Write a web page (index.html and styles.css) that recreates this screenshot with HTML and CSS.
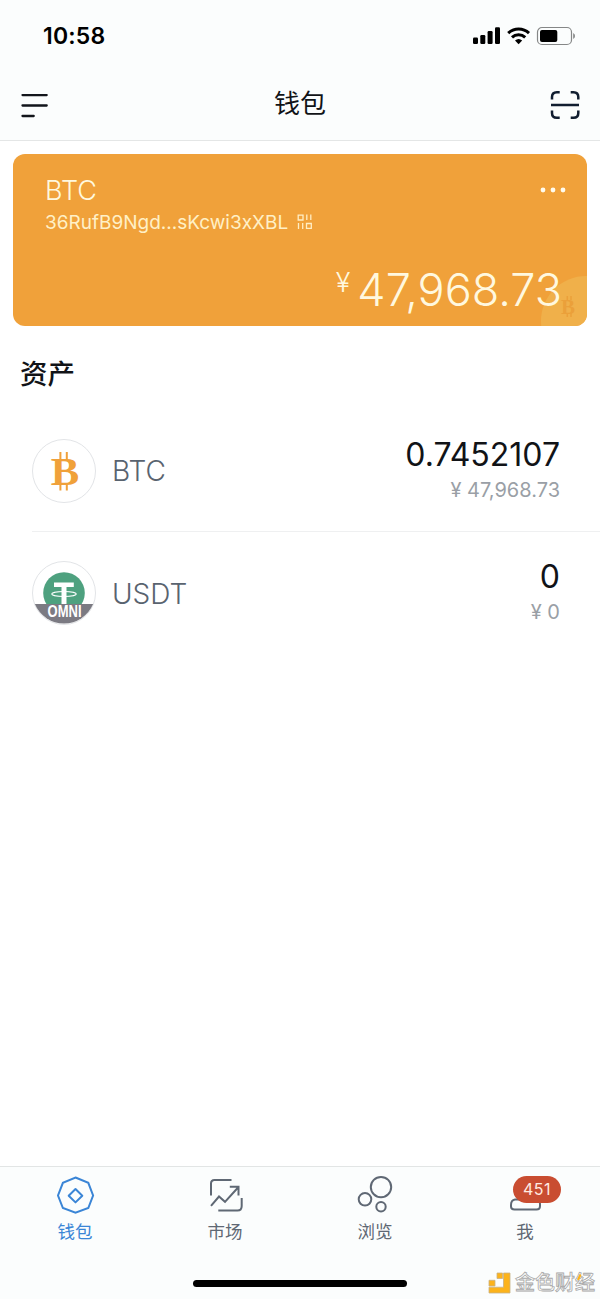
FILE: index.html
```html
<!DOCTYPE html>
<html lang="zh-CN">
<head>
<meta charset="utf-8">
<title>钱包</title>
<link rel="stylesheet" href="styles.css">
</head>
<body>
<div class="screen">
  <header class="header">
    <div class="status">
      <span class="time">10:58</span>
      <svg class="status-icons" width="104" height="20" viewBox="0 0 104 20">
        <rect x="1" y="11.5" width="5" height="6.5" rx="1.2"/>
        <rect x="8.3" y="9" width="5" height="9" rx="1.2"/>
        <rect x="15.6" y="5" width="5" height="13" rx="1.2"/>
        <rect x="23" y="1.3" width="5" height="16.700" rx="1.2"/>
        <g fill="none" stroke="#000" stroke-width="3">
          <path d="M36.200 7.200A15 15 0 0 1 57 7.200"/>
          <path d="M40 11.300A9.500 9.500 0 0 1 53.200 11.300"/>
        </g>
        <path d="M43 14.600A5.500 5.500 0 0 1 50.200 14.600L46.600 18.200Z"/>
        <rect x="65.500" y="1.500" width="34" height="17" rx="4.500" fill="none" stroke="#858787" stroke-width="1.200"/>
        <rect x="68" y="4" width="17.300" height="12" rx="2"/>
        <path d="M101.200 7v6Q103 12 103 10T101.200 7Z" fill="#858787"/>
      </svg>
    </div>
    <div class="navbar">
      <svg class="menu" width="30" height="30" viewBox="0 0 30 30" fill="none" stroke="#12151b" stroke-width="2.300" stroke-linecap="round"><path d="M2.500 5.100H26.700M2.500 15.500H26.700M2.500 26H13.700"/></svg>
      <h1 class="title">钱包</h1>
      <svg class="scan" width="30" height="30" viewBox="0 0 30 30" fill="none" stroke="#111e30" stroke-width="2.500"><path d="M2 9.500V7Q2 2.200 6.800 2.200H9.700M20.700 2.200H23.500Q28.300 2.200 28.300 7V9.500M2 20.500V23Q2 27.800 6.800 27.800H9.700M20.700 27.800H23.500Q28.300 27.800 28.300 23V20.500M1 14.900H29"/></svg>
    </div>
  </header>

  <main class="content">
    <section class="card">
      <div class="card-top">
        <span class="card-name">BTC</span>
        <svg class="dots" width="26" height="6" viewBox="0 0 26 6"><circle cx="3" cy="3" r="2.400"/><circle cx="13" cy="3" r="2.400"/><circle cx="23" cy="3" r="2.400"/></svg>
      </div>
      <div class="address">
        <span class="address-text">36RufB9Ngd...sKcwi3xXBL</span>
        <svg width="16" height="16" viewBox="0 0 16 16" fill="none" stroke="#ffeec4" stroke-width="1.300"><path d="M1.200 1.200H6V6H1.200ZM9.500 9.500H14.300V14.300H9.500ZM9.800 .600V6M13.800 .600V6M1.500 9V15M5.700 9V15"/></svg>
      </div>
      <div class="balance"><span class="yen">¥</span><span class="balance-number">47,968.73</span></div>
      <svg class="card-mark" width="46" height="50" viewBox="0 0 46 50">
        <circle cx="45" cy="45" r="45" fill="#f0b04a"/>
        <text class="coin-letter" x="20" y="38.200" font-size="21" fill="#eba03a">B</text>
        <path d="M26.300 20V24M30 20V24M26.300 37V41M30 37V41" stroke="#eba03a" stroke-width="1.500"/>
      </svg>
    </section>

    <h2 class="section-title">资产</h2>
    <div class="asset">
      <svg class="coin" width="64" height="64" viewBox="0 0 64 64">
        <circle cx="32" cy="32" r="31.500" fill="#fff" stroke="#e2e4e7"/>
        <text class="coin-letter" x="18.700" y="45.500" font-size="39" textLength="28.500" lengthAdjust="spacingAndGlyphs" fill="#f0a13a">B</text>
        <path d="M28.400 13V21M34.800 13V21M28.400 44V51.500M34.800 44V51.500" stroke="#f0a13a" stroke-width="2"/>
      </svg>
      <span class="asset-name">BTC</span>
      <div class="amounts"><span class="amount">0.7452107</span><span class="fiat">¥ 47,968.73</span></div>
    </div>
    <div class="asset asset-last">
      <svg class="coin" width="64" height="64" viewBox="0 0 64 64">
        <circle cx="32" cy="32" r="31.500" fill="#fff" stroke="#e2e4e7"/>
        <circle cx="32" cy="32" r="20.800" fill="#4ea17f"/>
        <path d="M22 21.500H41.800V26H34.500V45H29.500V26H22Z" fill="#fff"/>
        <ellipse cx="32" cy="33" rx="12.300" ry="2.500" fill="none" stroke="#fff" stroke-width="1.100"/>
        <path d="M2.900 43H61.100A31.500 31.500 0 0 1 2.900 43Z" fill="#7b7a82"/>
        <text class="omni" x="15.600" y="56.200" textLength="34" lengthAdjust="spacingAndGlyphs">OMNI</text>
      </svg>
      <span class="asset-name">USDT</span>
      <div class="amounts"><span class="amount">0</span><span class="fiat">¥ 0</span></div>
    </div>
  </main>

  <footer class="footer">
    <nav class="tabs">
      <div class="tab tab-active">
        <svg width="40" height="40" viewBox="0 0 40 40"><path d="M20.500 2.500L33.300 7.800L38.100 20.500L33.300 33L20.500 37.700L7.900 33L3 20.500L7.900 7.800Z"/><path d="M20.500 14L27.300 20.700L20.500 27.400L13.700 20.700Z" stroke-linejoin="round"/></svg>
        <span class="tab-label">钱包</span>
      </div>
      <div class="tab">
        <svg width="40" height="40" viewBox="0 0 40 40"><path d="M6 20.500V8.500Q6 5 9.500 5H26.500M36.700 23V31Q36.700 35.500 32.500 35.500H13.300M6 30.800L14 21.500L20 26.800L33.500 12M24.800 11.800H33.500V20.500"/></svg>
        <span class="tab-label">市场</span>
      </div>
      <div class="tab">
        <svg width="40" height="40" viewBox="0 0 40 40"><circle cx="26" cy="12.100" r="10.200"/><circle cx="10" cy="24.300" r="6.300"/><circle cx="26" cy="31.800" r="4.700"/></svg>
        <span class="tab-label">浏览</span>
      </div>
      <div class="tab">
        <svg width="40" height="40" viewBox="0 0 40 40"><path d="M10 24.500H32Q35 25 35 29V31Q35 34.500 31.500 34.500H9.500Q6 34.500 6 31.500V30Q6 25 10 24.500Z"/></svg>
        <span class="badge">451</span>
        <span class="tab-label">我</span>
      </div>
    </nav>
    <div class="home-bar"></div>
    <div class="watermark">
      <svg width="23" height="22" viewBox="0 0 23 22"><path d="M15.500 1H22V21H1V15.200H15.500ZM9 1H14.500V6.500H9ZM1 8.300H7V14H1Z" fill="#fcb31b" stroke="#c9b184" stroke-width=".8"/></svg>
      <span class="watermark-text">金色财经</span>
      <svg class="watermark-accent" width="5" height="9" viewBox="0 0 5 9"><path d="M3.500 .5L1 6" stroke="#fcb31b" stroke-width="2.200"/></svg>
    </div>
  </footer>
</div>
</body>
</html>
```
FILE: styles.css
```css
* { box-sizing: border-box; }
body {
  margin: 0;
  background: #fff;
  font-family: Inter, "Noto Sans CJK SC", sans-serif;
  color: #111317;
}
svg { display: block; flex: none; }
.screen { display: flex; flex-direction: column; width: 600px; height: 1299px; }
.header { height: 141px; background: #fbfdfd; border-bottom: 1px solid #e4e6e6; }
.status { display: flex; justify-content: space-between; align-items: center; height: 72px; padding: 0 24px 0 43px; }
.time { font-size: 23px; font-weight: 600; letter-spacing: .2px; color: #000; }
.navbar { display: flex; justify-content: space-between; align-items: center; height: 68px; padding: 0 20px; }
.menu { margin-top: -2px; }
.title { margin: -4px 0 0; font-size: 26px; font-weight: 400; line-height: 40px; }
.scan { margin-top: -2px; }
.content { flex: 1; }
.card {
  position: relative;
  height: 172px;
  margin: 13px 13px 0;
  padding: 20px 25px 0 32px;
  overflow: hidden;
  border-radius: 12px;
  background: #f0a13a;
  color: #fff8df;
}
.card-top { display: flex; justify-content: space-between; height: 34px; line-height: 34px; }
.card-name { font-size: 27px; font-weight: 300; }
.dots { margin: 13px -4px 0 0; fill: #fffbed; }
.address { display: flex; align-items: center; gap: 9px; height: 28px; color: #fff0c6; }
.address-text { font-size: 19px; }
.balance { position: relative; z-index: 1; display: flex; justify-content: flex-end; height: 60px; margin-top: 24px; line-height: 60px; }
.yen { margin: -7px 7px 0 0; font-size: 27px; font-weight: 300; }
.balance-number { font-size: 45px; font-weight: 300; }
.card-mark { position: absolute; right: 0; bottom: 0; }
.coin-letter { font-family: "Liberation Serif", serif; font-weight: 700; }
.section-title { margin: 28px 0 0 20px; font-size: 27.500px; font-weight: 500; line-height: 40px; }
.asset { display: flex; align-items: center; height: 122px; margin-left: 32px; padding-right: 40px; border-bottom: 1px solid #eff0f1; }
.section-title + .asset { margin-top: 16px; }
.asset-last { border-bottom: 0; }
.asset-name { margin: 1px 0 0 16px; font-size: 28px; font-weight: 300; color: #59636f; }
.amounts { display: flex; flex-direction: column; align-items: flex-end; margin-left: auto; }
.amount { height: 38px; font-size: 32px; line-height: 38px; }
.fiat { height: 32px; font-size: 20px; line-height: 32px; color: #9a9fa6; }
.omni { font-family: "Liberation Sans", sans-serif; font-size: 16px; font-weight: 700; fill: #fff; }
.footer { position: relative; height: 133px; background: #fbfdfd; border-top: 1px solid #e2e5e5; }
.tabs { display: flex; height: 113px; }
.tab { position: relative; flex: 1; display: flex; flex-direction: column; align-items: center; padding-top: 8px; color: #5f6874; }
.tab svg { fill: none; stroke: currentColor; stroke-width: 2; }
.tab-active { color: #3a85d6; }
.tab-label { margin-top: 4px; font-size: 17.500px; line-height: 26px; }
.badge { position: absolute; left: 63px; top: 9px; width: 48px; height: 27px; border-radius: 14px; background: #c94d31; color: #ffebe2; font-size: 16px; line-height: 27px; text-align: center; letter-spacing: .4px; }
.home-bar { width: 214px; height: 7px; margin: 0 auto; border-radius: 4px; background: #000; }
.watermark { position: absolute; right: 5px; bottom: 4px; display: flex; align-items: center; gap: 4px; height: 24px; }
.watermark-text { font-size: 20px; font-weight: 500; line-height: 24px; color: #fff; -webkit-text-stroke: .8px #a7a7a7; }
.watermark-accent { position: absolute; right: 13px; top: 3px; }
```
